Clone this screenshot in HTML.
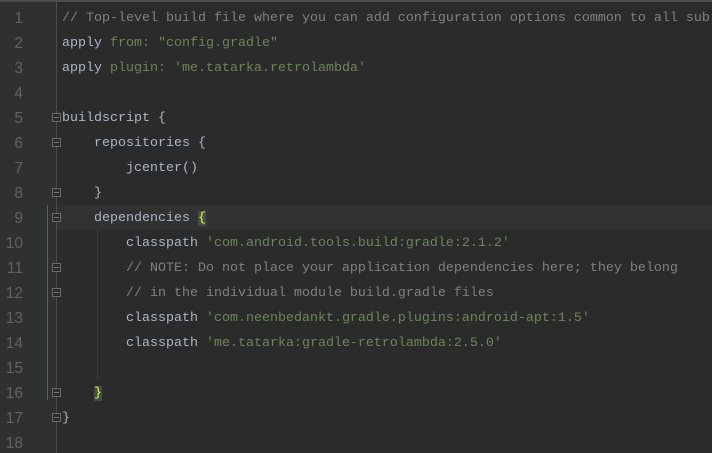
<!DOCTYPE html>
<html><head><style>
html,body{margin:0;width:712px;height:453px;overflow:hidden}
body{background:#2b2b2b;position:relative;font-family:"Liberation Mono",monospace;font-size:13.33px}
.wrap{position:absolute;left:0;top:0;width:712px;height:453px;overflow:hidden}
.top{position:absolute;left:0;top:0;width:712px;height:2px;background:#4b4d4f}
.gut{position:absolute;left:0;top:2px;width:56px;height:451px;background:#2e3032}
.sep{position:absolute;left:56px;top:2px;width:1px;height:451px;background:#4a4c4e}
.cur{position:absolute;left:57px;top:205px;width:655px;height:25px;background:#323232}
.ln{position:absolute;left:0;width:23px;text-align:right;color:#606366;line-height:25px;height:25px;font-family:"Liberation Sans",sans-serif;font-size:15.5px}
.cd{position:absolute;left:62px;line-height:25px;height:25px;color:#a9b7c6;white-space:pre}
.s{color:#6a8759}.c{color:#808080}.b{background:#3b514d;color:#ffef28}
.fold{position:absolute;left:52px;width:9px;height:9px;border:1px solid #6b6b6b;box-sizing:border-box;background:#2b2b2b}
.fold:after{content:"";position:absolute;left:1px;top:3px;width:5px;height:1px;background:#7a7a7a}
</style></head><body><div class="wrap">
<div class="top"></div><div class="gut"></div><div class="sep"></div><div class="cur"></div>
<div style="position:absolute;left:47px;top:205px;width:1px;height:195px;background:#4c6a5a"></div>
<div style="position:absolute;left:97px;top:230px;width:1px;height:150px;background:#3b3b3b"></div>
<div class="ln" style="top:6px">1</div><div class="ln" style="top:31px">2</div><div class="ln" style="top:56px">3</div><div class="ln" style="top:81px">4</div><div class="ln" style="top:106px">5</div><div class="ln" style="top:131px">6</div><div class="ln" style="top:156px">7</div><div class="ln" style="top:181px">8</div><div class="ln" style="top:206px">9</div><div class="ln" style="top:231px">10</div><div class="ln" style="top:256px">11</div><div class="ln" style="top:281px">12</div><div class="ln" style="top:306px">13</div><div class="ln" style="top:331px">14</div><div class="ln" style="top:356px">15</div><div class="ln" style="top:381px">16</div><div class="ln" style="top:406px">17</div><div class="ln" style="top:431px">18</div>
<div class="fold" style="top:113px"></div><div class="fold" style="top:138px"></div><div class="fold" style="top:188px"></div><div class="fold" style="top:213px"></div><div class="fold" style="top:263px"></div><div class="fold" style="top:288px"></div><div class="fold" style="top:388px"></div><div class="fold" style="top:413px"></div>
<div class="cd c" style="top:6px">// Top-level build file where you can add configuration options common to all sub</div>
<div class="cd" style="top:31px">apply <span class="s">from: "config.gradle"</span></div>
<div class="cd" style="top:56px">apply <span class="s">plugin: 'me.tatarka.retrolambda'</span></div>
<div class="cd" style="top:106px">buildscript {</div>
<div class="cd" style="top:131px">    repositories {</div>
<div class="cd" style="top:156px">        jcenter()</div>
<div class="cd" style="top:181px">    }</div>
<div class="cd" style="top:206px">    dependencies <span class="b">{</span></div>
<div class="cd" style="top:231px">        classpath <span class="s">'com.android.tools.build:gradle:2.1.2'</span></div>
<div class="cd c" style="top:256px">        // NOTE: Do not place your application dependencies here; they belong</div>
<div class="cd c" style="top:281px">        // in the individual module build.gradle files</div>
<div class="cd" style="top:306px">        classpath <span class="s">'com.neenbedankt.gradle.plugins:android-apt:1.5'</span></div>
<div class="cd" style="top:331px">        classpath <span class="s">'me.tatarka:gradle-retrolambda:2.5.0'</span></div>
<div class="cd" style="top:381px">    <span class="b">}</span></div>
<div class="cd" style="top:406px">}</div>
</div></body></html>
